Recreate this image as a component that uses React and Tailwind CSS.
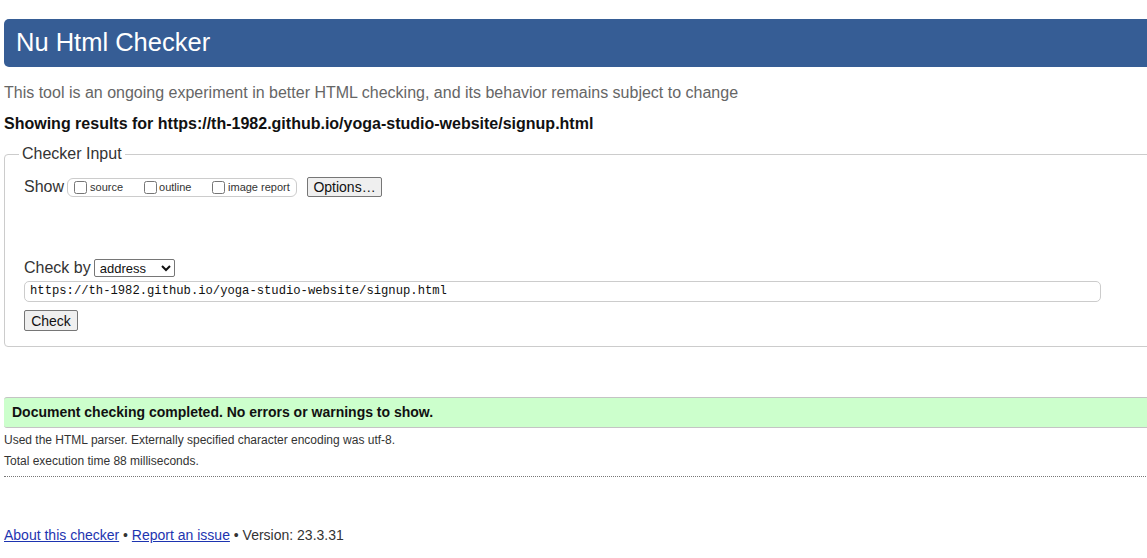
const URL = 'https://th-1982.github.io/yoga-studio-website/signup.html';

const App = () => {
  return (
    <div className="w-[1147px] h-[558px] overflow-hidden bg-white text-[#222] font-['Liberation_Sans',Arial,sans-serif]">
      <div className="w-[1180px] pl-1">
        {/* Header */}
        <div className="mt-[19px] h-[48px] bg-[#365d95] rounded-l-[5px] pl-3 flex items-center">
          <h1 className="text-[25.5px] text-white leading-none">Nu Html Checker</h1>
        </div>

        <p className="mt-[17px] text-[16px] leading-[18px] text-[#666]">
          This tool is an ongoing experiment in better HTML checking, and its behavior remains subject to change
        </p>
        <p className="mt-[13px] text-[16px] leading-[18px] font-bold text-[#111]">
          Showing results for {URL}
        </p>

        {/* Checker input */}
        <fieldset className="mt-[12px] border border-[#ccc] rounded-[4px] pl-[19px] pr-4 pb-[13px]">
          <legend className="ml-[-5px] px-[3px] text-[16px] leading-[18px] text-[#333]">Checker Input</legend>

          <div className="mt-[13px] flex items-center h-[22px]">
            <span className="text-[16px] text-[#333]">Show</span>
            <div className="ml-[3px] h-[19px] w-[230px] border border-[#ccc] rounded-[6px] flex items-center pl-[6px]">
              <label className="flex items-center text-[11px] text-[#333] w-[70px]">
                <input type="checkbox" className="m-0 mr-[3px] w-[13px] h-[13px]" />source
              </label>
              <label className="flex items-center text-[11px] text-[#333] w-[68px]">
                <input type="checkbox" className="m-0 mr-[2px] w-[13px] h-[13px]" />outline
              </label>
              <label className="flex items-center text-[11px] text-[#333]">
                <input type="checkbox" className="m-0 mr-[3px] w-[13px] h-[13px]" />image report
              </label>
            </div>
            <button className="ml-[10px] h-[20px] w-[75px] border border-[#767676] rounded-[2px] bg-[#efefef] text-[14px] text-[#111] leading-none">
              Options…
            </button>
          </div>

          <div className="mt-[60px] flex items-center h-[19px]">
            <span className="text-[16px] text-[#333]">Check by</span>
            <select
              defaultValue="address"
              className="ml-[3px] h-[18px] w-[81px] border border-[#767676] rounded-[2px] bg-white text-[13px] text-[#111] pl-[1px]"
            >
              <option value="address">address</option>
              <option value="file">file upload</option>
              <option value="text">text input</option>
            </select>
          </div>

          <div className="mt-[4px] h-[21px] w-[1077px] border border-[#ccc] rounded-[5px] flex items-center pl-[5px]">
            <span className="font-['Liberation_Mono',monospace] text-[12.2px] text-[#111]">{URL}</span>
          </div>

          <button className="mt-[8px] h-[21px] w-[54px] border border-[#767676] rounded-[2px] bg-[#efefef] text-[14px] text-[#111] leading-none">
            Check
          </button>
        </fieldset>

        {/* Result */}
        <div className="mt-[50px] h-[31px] bg-[#ccffcc] border-y border-[#c4c4c4] rounded-l-[3px] flex items-center pl-2">
          <p className="text-[14px] font-bold text-[#111]">Document checking completed. No errors or warnings to show.</p>
        </div>
        <p className="mt-[5px] text-[12px] leading-[14px] text-[#333]">
          Used the HTML parser. Externally specified character encoding was utf-8.
        </p>
        <p className="mt-[7px] text-[12px] leading-[14px] text-[#333]">Total execution time 88 milliseconds.</p>
        <div className="mt-[8px] border-t border-dotted border-[#777]" />

        {/* Footer */}
        <p className="mt-[48px] text-[14px] text-[#333]">
          <a href="#" className="text-[#1d34b0] underline">About this checker</a>
          {' • '}
          <a href="#" className="text-[#1d34b0] underline">Report an issue</a>
          {' • Version: 23.3.31'}
        </p>
      </div>
    </div>
  );
};

export default App;
